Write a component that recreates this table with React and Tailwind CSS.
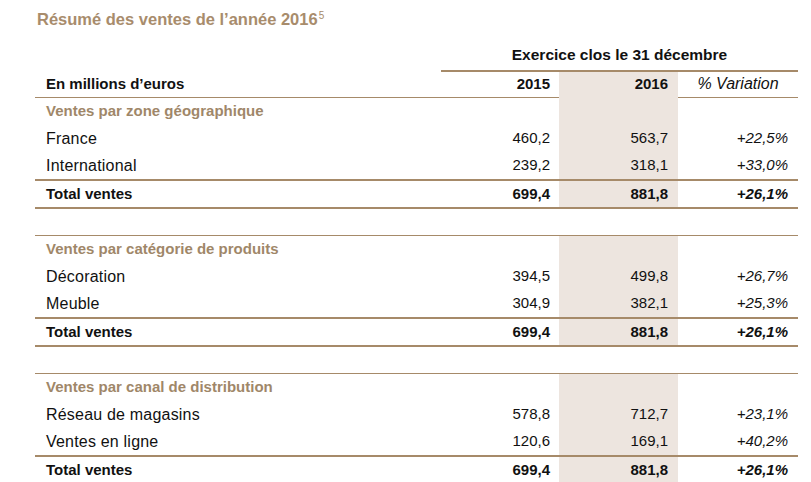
import React from 'react';

const sections = [
  {
    title: 'Ventes par zone géographique',
    items: [
      ['France', '460,2', '563,7', '+22,5%'],
      ['International', '239,2', '318,1', '+33,0%'],
    ],
  },
  {
    title: 'Ventes par catégorie de produits',
    items: [
      ['Décoration', '394,5', '499,8', '+26,7%'],
      ['Meuble', '304,9', '382,1', '+25,3%'],
    ],
  },
  {
    title: 'Ventes par canal de distribution',
    items: [
      ['Réseau de magasins', '578,8', '712,7', '+23,1%'],
      ['Ventes en ligne', '120,6', '169,1', '+40,2%'],
    ],
  },
];

const grid = 'grid grid-cols-[406px_118px_119px_120px]';

function Row({ label, a, b, c, kind = 'item' }) {
  const h = kind === 'total' ? 'h-[26px]' : 'h-[27px]';
  const labelCls =
    kind === 'section'
      ? 'font-bold text-[15px] text-[#9f8769]'
      : kind === 'total'
      ? 'font-bold text-[15px]'
      : 'text-[16px] tracking-[0.2px]';
  const num = kind === 'total' ? 'font-bold' : '';
  return (
    <div className={`${grid} ${h}`}>
      <div className={`flex items-center pl-[11px] ${labelCls}`}>{label}</div>
      <div className={`flex items-center justify-end pr-[9px] text-[15px] ${num}`}>{a}</div>
      <div className={`flex items-center justify-end pr-[10px] text-[15px] bg-[#ede5df] ${num}`}>{b}</div>
      <div className={`flex items-center justify-end pr-[10px] text-[15px] italic ${num}`}>{c}</div>
    </div>
  );
}

export default function App() {
  return (
    <div className="w-[811px] h-[482px] overflow-hidden bg-white text-[#111] font-['Liberation_Sans',Arial,sans-serif]">
      <div className="ml-[35px] w-[763px]">
        <div className="h-[42px] pl-[2px] pt-[8px] text-[16.5px] font-bold text-[#a88c6c] leading-[22px]">
          Résumé des ventes de l’année 2016
          <span className="relative top-[-6px] ml-[1px] text-[10px] font-normal">5</span>
        </div>

        <div className={`${grid} h-[30px]`}>
          <div />
          <div className="col-span-3 flex items-center justify-center border-b-2 border-[#a68a69] pb-[2px] text-[15.5px] font-bold">
            Exercice clos le 31 décembre
          </div>
        </div>

        <div className={`${grid} h-[26px] border-b border-[#a68a69] text-[15px]`}>
          <div className="flex items-center pl-[11px] pb-[2px] font-bold">En millions d’euros</div>
          <div className="flex items-center justify-end pr-[9px] pb-[2px] font-bold">2015</div>
          <div className="flex items-center justify-end pr-[10px] pb-[2px] font-bold bg-[#ede5df]">2016</div>
          <div className="flex items-center justify-center pb-[2px] italic text-[16px]">% Variation</div>
        </div>

        {sections.map((s, i) => (
          <div key={s.title}>
            <div className={i > 0 ? 'border-t border-[#a68a69]' : ''}>
              <Row label={s.title} kind="section" />
              {s.items.map(([l, a, b, c]) => (
                <Row key={l} label={l} a={a} b={b} c={c} />
              ))}
            </div>
            <div className="border-y-2 border-[#a68a69]">
              <Row label="Total ventes" a="699,4" b="881,8" c="+26,1%" kind="total" />
            </div>
            <div className="h-[26px]" />
          </div>
        ))}
      </div>
    </div>
  );
}
